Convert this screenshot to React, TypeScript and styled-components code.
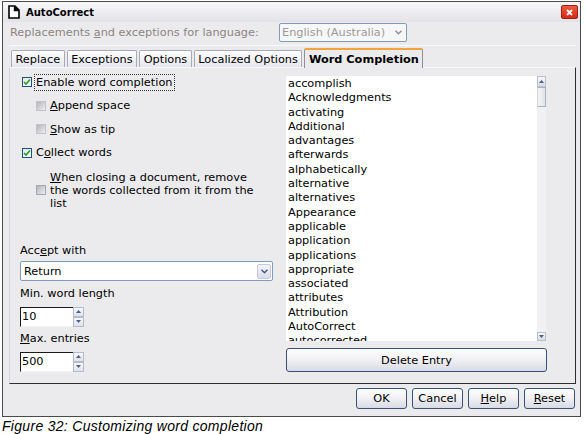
import styled, { createGlobalStyle } from 'styled-components';

const GlobalStyle = createGlobalStyle`
  html, body { margin: 0; padding: 0; background: #fff; }
  body {
    font-family: "DejaVu Sans", Verdana, sans-serif;
    font-size: 11.3px;
    color: #000;
  }
`;

const Page = styled.div`
  width: 586px;
  height: 434px;
  overflow: hidden;
  background: #fff;
`;

const Window = styled.div`
  margin: 1px 0 0 2px;
  width: 577px;
  height: 414px;
  border: 1px solid #4a4a4a;
  background: #ebebee;
  display: flex;
  flex-direction: column;
`;

const TitleBar = styled.div`
  height: 20px;
  display: flex;
  align-items: center;
  padding-left: 5px;
  background: linear-gradient(#f8f8fa, #e2e2e8);
`;

const TitleText = styled.span`
  margin-left: 6px;
  font-weight: bold;
  font-size: 10px;
`;

const CloseButton = styled.div`
  margin-left: auto;
  margin-right: 2px;
  width: 15px;
  height: 12px;
  border: 1px solid #a52010;
  border-radius: 2px;
  background: linear-gradient(#f05a40, #d42a14);
  display: flex;
  align-items: center;
  justify-content: center;
`;

const Body = styled.div`
  flex: 1;
  display: flex;
  flex-direction: column;
  padding: 0 4px 0 6px;
`;

const LangRow = styled.div`
  margin-top: 1px;
  height: 19px;
  display: flex;
  align-items: center;
  padding-left: 1px;
`;

const DimLabel = styled.span`
  flex: 0 0 269px;
  color: #8d8580;
`;

const Select = styled.div<{ $width: number; $disabled?: boolean }>`
  box-sizing: border-box;
  width: ${(p) => p.$width}px;
  height: 19px;
  border: 1px solid #7f9db9;
  border-radius: 2px;
  background: ${(p) => (p.$disabled ? '#f7f7f8' : '#fff')};
  color: ${(p) => (p.$disabled ? '#9a9a9a' : '#000')};
  display: flex;
  align-items: center;
  padding-left: 2px;
`;

const SelectText = styled.span`
  flex: 1;
`;

const DropButton = styled.div`
  width: 14px;
  height: 15px;
  margin-right: 1px;
  box-sizing: border-box;
  border: 1px solid #c3cbdc;
  border-radius: 2px;
  background: linear-gradient(#f4f5f9, #d9dde8);
  display: flex;
  align-items: center;
  justify-content: center;
`;

const Separator = styled.div`
  margin-top: 3px;
  height: 1px;
  background: #fafafb;
`;

const TabsRow = styled.div`
  margin-top: 2px;
  height: 19px;
  display: flex;
  align-items: flex-end;
  gap: 2px;
  padding-left: 2px;
`;

const Tab = styled.div<{ $active?: boolean }>`
  box-sizing: border-box;
  height: ${(p) => (p.$active ? 20 : 17)}px;
  margin-bottom: ${(p) => (p.$active ? -1 : 0)}px;
  padding: 0 3.5px;
  display: flex;
  align-items: center;
  border: 1px solid ${(p) => (p.$active ? '#8f8f98' : '#a8aab6')};
  border-bottom: none;
  border-top: ${(p) => (p.$active ? '2px solid #f0a53c' : '1px solid #a8aab6')};
  border-radius: 2px 2px 0 0;
  background: ${(p) => (p.$active ? '#ebebee' : 'linear-gradient(#fdfdfe, #e6e7ee)')};
  font-weight: ${(p) => (p.$active ? 'bold' : 'normal')};
  position: relative;
  z-index: ${(p) => (p.$active ? 1 : 0)};
`;

const Panel = styled.div`
  box-sizing: border-box;
  width: 567px;
  height: 317px;
  border: 1px solid #2e2e2e;
  border-top-color: #f8f8fa;
  border-left-color: #d6d6dc;
  padding: 6px 0 0 10px;
  display: grid;
  grid-template-columns: 255px 261px;
  column-gap: 11px;
  align-items: start;
`;

const LeftCol = styled.div`
  display: flex;
  flex-direction: column;
`;

const CheckRow = styled.div<{ $indent?: boolean; $first?: boolean }>`
  height: 14px;
  margin-top: ${(p) => (p.$first ? 1 : 9.5)}px;
  margin-left: ${(p) => (p.$indent ? 16 : 2)}px;
  display: flex;
  align-items: center;
  gap: 4px;
  white-space: nowrap;
`;

const WrapRow = styled.div`
  margin-top: 11px;
  margin-left: 16px;
  display: flex;
  align-items: center;
  gap: 4px;
  line-height: 13px;
`;

const Box = styled.span<{ $kind: 'checked' | 'disabled' | 'empty' }>`
  box-sizing: border-box;
  flex: 0 0 10px;
  width: 10px;
  height: 10px;
  display: flex;
  align-items: center;
  justify-content: center;
  border: 1px solid
    ${(p) => (p.$kind === 'checked' ? '#1c5180' : p.$kind === 'empty' ? '#9ea6b8' : '#c4c4c8')};
  background: ${(p) =>
    p.$kind === 'checked' ? 'linear-gradient(135deg, #e4e4ea, #fff)' : 'linear-gradient(135deg, #b4b4b8, #efeff2)'};
`;

const FocusText = styled.span`
  outline: 1px dotted #333;
  outline-offset: 1px;
  padding: 0 1px 0 0;
`;

const FieldLabel = styled.div<{ $gap: number }>`
  height: 14px;
  line-height: 14px;
  margin-top: ${(p) => p.$gap}px;
`;

const Combo = styled(Select)`
  margin-top: 3px;
  height: 20px;
  padding-left: 3px;
`;

const Spin = styled.div`
  margin-top: 6px;
  display: flex;
  height: 20px;
`;

const SpinField = styled.div`
  box-sizing: border-box;
  width: 53px;
  height: 20px;
  background: #fff;
  border-top: 1px solid #1a1a1a;
  border-left: 1px solid #1a1a1a;
  border-bottom: 1px solid #f4f4f6;
  padding-left: 1px;
  line-height: 18px;
`;

const SpinButtons = styled.div`
  width: 11px;
  display: flex;
  flex-direction: column;
`;

const SpinHalf = styled.div`
  flex: 1;
  box-sizing: border-box;
  border: 1px solid #b4bccc;
  background: linear-gradient(#f7f7fa, #dfe2ea);
  display: flex;
  align-items: center;
  justify-content: center;
`;

const RightCol = styled.div`
  margin-top: 2px;
  display: flex;
  flex-direction: column;
`;

const WordList = styled.div`
  height: 265px;
  width: 260px;
  display: flex;
  background: #fff;
`;

const Items = styled.ul`
  flex: 1;
  margin: 0;
  padding: 1px 0 0 2px;
  list-style: none;
  overflow: hidden;
  line-height: 14.3px;
`;

const Scrollbar = styled.div`
  width: 9px;
  display: flex;
  flex-direction: column;
  background: #f1f1f4;
`;

const ScrollArrow = styled.div<{ $h: number }>`
  height: ${(p) => p.$h}px;
  box-sizing: border-box;
  border: 1px solid #b9c0d0;
  background: linear-gradient(#f7f7fa, #d8dbe5);
  display: flex;
  align-items: center;
  justify-content: center;
`;

const Thumb = styled.div`
  height: 20px;
  box-sizing: border-box;
  border: 1px solid #a9b1c4;
  border-left-color: #d2d6e0;
  background: linear-gradient(90deg, #f4f4f7, #e2e4ea);
`;

const PushButton = styled.div<{ $w?: number; $h?: number }>`
  box-sizing: border-box;
  width: ${(p) => (p.$w ? `${p.$w}px` : '100%')};
  height: ${(p) => p.$h ?? 21}px;
  border: 1px solid #3b5278;
  border-radius: 3px;
  background: linear-gradient(#ffffff 0%, #f2f2f6 45%, #d9dae4 100%);
  display: flex;
  align-items: center;
  justify-content: center;
`;

const DeleteButton = styled(PushButton)`
  margin-top: 7px;
  width: 261px;
`;

const Footer = styled.div`
  margin-top: 4px;
  padding-right: 1px;
  display: flex;
  justify-content: flex-end;
  gap: 5px;
`;

const Caption = styled.div`
  margin-top: 1px;
  padding-left: 2px;
  font-family: "Liberation Sans", Arial, sans-serif;
  font-style: italic;
  font-size: 14px;
  letter-spacing: 0.3px;
  line-height: 16px;
`;

const Check = () => (
  <svg width="8" height="8" viewBox="0 0 8 8">
    <path d="M1 4 L3 6 L7 1.5" fill="none" stroke="#21a121" strokeWidth="1.6" />
  </svg>
);

const Chevron = ({ color = '#3d5a8a' }: { color?: string }) => (
  <svg width="7" height="5" viewBox="0 0 7 5">
    <path d="M0.5 0.8 L3.5 3.8 L6.5 0.8" fill="none" stroke={color} strokeWidth="1.4" />
  </svg>
);

const Arrow = ({ up }: { up?: boolean }) => (
  <svg width="5" height="3" viewBox="0 0 5 3">
    <path d={up ? 'M0 3 L2.5 0 L5 3 Z' : 'M0 0 L2.5 3 L5 0 Z'} fill="#4d5f80" />
  </svg>
);

const DocIcon = () => (
  <svg width="12" height="14" viewBox="0 0 12 14">
    <path d="M1 1 H7 L11 5 V13 H1 Z" fill="#fff" stroke="#000" strokeWidth="1.6" />
    <path d="M6.5 1 V5.5 H11" fill="#000" stroke="#000" strokeWidth="1.4" />
  </svg>
);

const words = [
  'accomplish',
  'Acknowledgments',
  'activating',
  'Additional',
  'advantages',
  'afterwards',
  'alphabetically',
  'alternative',
  'alternatives',
  'Appearance',
  'applicable',
  'application',
  'applications',
  'appropriate',
  'associated',
  'attributes',
  'Attribution',
  'AutoCorrect',
  'autocorrected',
];

const tabs = ['Replace', 'Exceptions', 'Options', 'Localized Options', 'Word Completion'];

const SpinBox = ({ value }: { value: string }) => (
  <Spin>
    <SpinField>{value}</SpinField>
    <SpinButtons>
      <SpinHalf>
        <Arrow up />
      </SpinHalf>
      <SpinHalf>
        <Arrow />
      </SpinHalf>
    </SpinButtons>
  </Spin>
);

export default function App() {
  return (
    <Page>
      <GlobalStyle />
      <Window>
        <TitleBar>
          <DocIcon />
          <TitleText>AutoCorrect</TitleText>
          <CloseButton>
            <svg width="7" height="7" viewBox="0 0 7 7">
              <path d="M1 1 L6 6 M6 1 L1 6" stroke="#fff" strokeWidth="1.8" />
            </svg>
          </CloseButton>
        </TitleBar>
        <Body>
          <LangRow>
            <DimLabel>
              Replacements <u>a</u>nd exceptions for language:
            </DimLabel>
            <Select $width={128} $disabled>
              <SelectText>English (Australia)</SelectText>
              <Chevron color="#8a8f9c" />
              <span style={{ width: 4 }} />
            </Select>
          </LangRow>
          <Separator />
          <TabsRow>
            {tabs.map((t) => (
              <Tab key={t} $active={t === 'Word Completion'}>
                {t}
              </Tab>
            ))}
          </TabsRow>
          <Panel>
            <LeftCol>
              <CheckRow $first>
                <Box $kind="checked">
                  <Check />
                </Box>
                <FocusText>Enable word completion</FocusText>
              </CheckRow>
              <CheckRow $indent>
                <Box $kind="disabled" />
                <span>
                  <u>A</u>ppend space
                </span>
              </CheckRow>
              <CheckRow $indent>
                <Box $kind="disabled" />
                <span>
                  <u>S</u>how as tip
                </span>
              </CheckRow>
              <CheckRow>
                <Box $kind="checked">
                  <Check />
                </Box>
                <span>
                  C<u>o</u>llect words
                </span>
              </CheckRow>
              <WrapRow>
                <Box $kind="empty" />
                <span>
                  <u>W</u>hen closing a document, remove
                  <br />
                  the words collected from it from the
                  <br />
                  list
                </span>
              </WrapRow>
              <FieldLabel $gap={34.5}>
                Acc<u>e</u>pt with
              </FieldLabel>
              <Combo $width={253}>
                <SelectText>Return</SelectText>
                <DropButton>
                  <Chevron />
                </DropButton>
              </Combo>
              <FieldLabel $gap={5.5}>Min. word length</FieldLabel>
              <SpinBox value="10" />
              <FieldLabel $gap={5}>
                <u>M</u>ax. entries
              </FieldLabel>
              <SpinBox value="500" />
            </LeftCol>
            <RightCol>
              <WordList>
                <Items>
                  {words.map((w) => (
                    <li key={w}>{w}</li>
                  ))}
                </Items>
                <Scrollbar>
                  <ScrollArrow $h={11}>
                    <Arrow up />
                  </ScrollArrow>
                  <Thumb />
                  <div style={{ flex: 1 }} />
                  <ScrollArrow $h={9}>
                    <Arrow />
                  </ScrollArrow>
                </Scrollbar>
              </WordList>
              <DeleteButton $h={24}>Delete Entry</DeleteButton>
            </RightCol>
          </Panel>
          <Footer>
            <PushButton $w={51}>OK</PushButton>
            <PushButton $w={51}>Cancel</PushButton>
            <PushButton $w={51}>
              <span>
                <u>H</u>elp
              </span>
            </PushButton>
            <PushButton $w={51}>
              <span>
                <u>R</u>eset
              </span>
            </PushButton>
          </Footer>
        </Body>
      </Window>
      <Caption>Figure 32: Customizing word completion</Caption>
    </Page>
  );
}
